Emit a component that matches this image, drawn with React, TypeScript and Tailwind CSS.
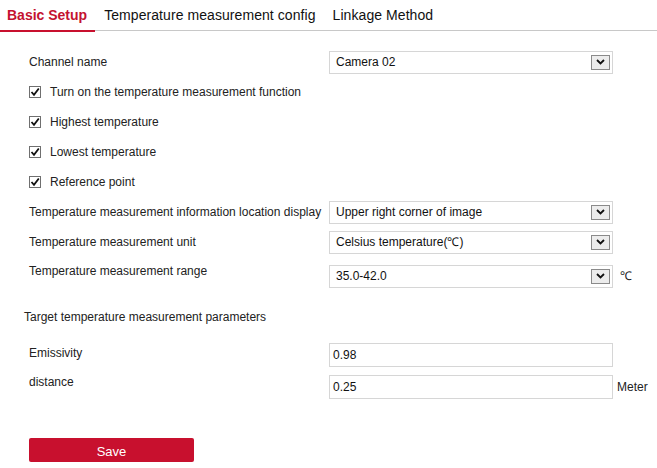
import React from "react"

const font = { fontFamily: '"Liberation Sans", Arial, sans-serif' }

function Chevron() {
  return (
    <span className="flex h-[15px] w-[19px] items-center justify-center border border-[#8a8a8a] bg-[#ececec]">
      <svg width="9" height="6" viewBox="0 0 9 6">
        <path d="M1 1 L4.5 4.5 L8 1" fill="none" stroke="#111" strokeWidth="1.8" />
      </svg>
    </span>
  )
}

function Select({ value }: { value: string }) {
  return (
    <div className="flex h-[23px] w-[284px] items-center justify-between border border-[#d6d6d6] bg-white pl-[6px] pr-[2px]">
      <span className="text-[12px] text-[#111]">{value}</span>
      <Chevron />
    </div>
  )
}

function TextInput({ value }: { value: string }) {
  return (
    <div className="flex h-[24px] w-[284px] items-center border border-[#d6d6d6] bg-white pl-[3px]">
      <span className="text-[12px] text-[#111]">{value}</span>
    </div>
  )
}

function Check({ label }: { label: string }) {
  return (
    <div className="flex h-[30px] items-center">
      <span className="flex h-[12px] w-[12px] items-center justify-center border border-[#6f6f6f] bg-white">
        <svg width="10" height="10" viewBox="0 0 10 10">
          <path d="M1.5 5 L4 7.8 L8.8 1.5" fill="none" stroke="#111" strokeWidth="1.8" />
        </svg>
      </span>
      <span className="ml-[9px]">{label}</span>
    </div>
  )
}

const tabs = ["Basic Setup", "Temperature measurement config", "Linkage Method"]

export default function App() {
  return (
    <div className="h-[468px] w-[657px] overflow-hidden bg-white text-[12px] text-[#222]" style={font}>
      {/* tab bar */}
      <div className="flex h-[31px] border-b border-[#c8c8c8]">
        {tabs.map((t, i) => (
          <div
            key={t}
            className={
              i === 0
                ? "flex h-[32px] shrink-0 items-center border-b-2 border-[#c8102e] pl-[7px] pr-[8px] text-[14px] font-bold text-[#c41230]"
                : "flex h-[30px] shrink-0 items-center pl-[9px] pr-[8px] text-[14px] tracking-[0.07px] text-[#111]"
            }
          >
            {t}
          </div>
        ))}
      </div>

      <div className="flex flex-col pl-[29px]">
        <div className="mt-[16px] flex h-[30px] items-center">
          <span className="w-[300px]">Channel name</span>
          <Select value="Camera 02" />
        </div>

        <Check label="Turn on the temperature measurement function" />
        <Check label="Highest temperature" />
        <Check label="Lowest temperature" />
        <Check label="Reference point" />

        <div className="flex h-[30px] items-center">
          <span className="w-[300px]">Temperature measurement information location display</span>
          <Select value="Upper right corner of image" />
        </div>
        <div className="flex h-[30px] items-center">
          <span className="w-[300px]">Temperature measurement unit</span>
          <Select value="Celsius temperature(℃)" />
        </div>
        <div className="mt-[4px] flex h-[30px] items-center">
          <span className="mb-[10px] w-[300px]">Temperature measurement range</span>
          <Select value="35.0-42.0" />
          <span className="ml-[7px]">℃</span>
        </div>

        <div className="-ml-[5px] mt-[16px] flex h-[20px] items-center">Target temperature measurement parameters</div>

        <div className="mt-[13px] flex h-[30px] items-center">
          <span className="mb-[5px] w-[300px]">Emissivity</span>
          <TextInput value="0.98" />
        </div>
        <div className="mt-[2px] flex h-[30px] items-center">
          <span className="mb-[10px] w-[300px]">distance</span>
          <TextInput value="0.25" />
          <span className="ml-[4px]">Meter</span>
        </div>

        <button className="mt-[36px] h-[24px] w-[165px] rounded-[2px] bg-[#c8102e] pt-[3px] text-[13px] text-white">
          Save
        </button>
      </div>
    </div>
  )
}
